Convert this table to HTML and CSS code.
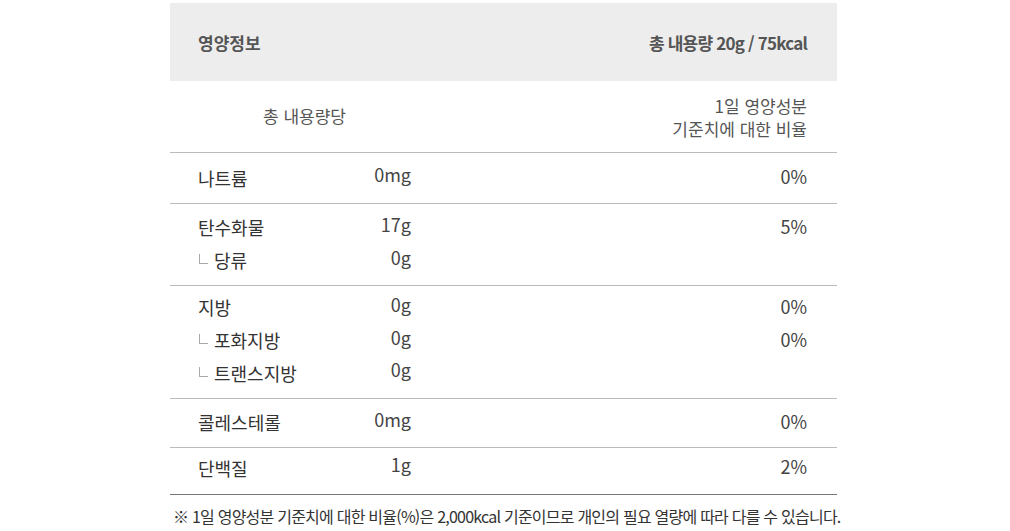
FILE: index.html
```html
<!DOCTYPE html>
<html lang="ko">
<head>
<meta charset="utf-8">
<link rel="stylesheet" href="styles.css">
</head>
<body>
<div class="wrap">
  <div class="nutri">
    <div class="head">
      <span class="head-title">영양정보</span>
      <span class="head-total">총 내용량 20g / 75kcal</span>
    </div>
    <div class="sub">
      <div class="sub-left">총 내용량당</div>
      <div class="sub-right">1일 영양성분<br>기준치에 대한 비율</div>
    </div>
    <div class="group g1">
      <div class="name">나트륨</div><div class="val">0mg</div><div class="pct">0%</div>
    </div>
    <div class="group g2">
      <div class="name">탄수화물</div><div class="val">17g</div><div class="pct">5%</div>
      <div class="name"><span class="tick"></span>당류</div><div class="val">0g</div><div class="pct"></div>
    </div>
    <div class="group g3">
      <div class="name">지방</div><div class="val">0g</div><div class="pct">0%</div>
      <div class="name"><span class="tick"></span>포화지방</div><div class="val">0g</div><div class="pct">0%</div>
      <div class="name"><span class="tick"></span>트랜스지방</div><div class="val">0g</div><div class="pct"></div>
    </div>
    <div class="group g4">
      <div class="name">콜레스테롤</div><div class="val">0mg</div><div class="pct">0%</div>
    </div>
    <div class="group g5">
      <div class="name">단백질</div><div class="val">1g</div><div class="pct">2%</div>
    </div>
  </div>
  <p class="note">※ 1일 영양성분 기준치에 대한 비율(%)은 2,000kcal 기준이므로 개인의 필요 열량에 따라 다를 수 있습니다.</p>
</div>
</body>
</html>
```
FILE: styles.css
```css
* { box-sizing: border-box; }
html, body { margin: 0; padding: 0; background: #fff; }
body {
  font-family: "Noto Sans CJK KR", "Noto Sans", sans-serif;
  color: #333;
}
.wrap {
  padding: 3px 0 0 170px;
}
.nutri {
  width: 667px;
}
.head {
  background: #ededed;
  height: 78px;
  display: flex;
  justify-content: space-between;
  align-items: center;
  padding: 0 30px 0 28px;
  font-weight: 700;
  font-size: 17px;
  color: #555;
}
.head-total {
  letter-spacing: -0.8px;
}
.sub {
  display: grid;
  grid-template-columns: 213px 1fr;
  padding: 13px 30px 9px 28px;
  border-bottom: 1px solid #bbb;
  font-size: 17px;
  color: #555;
  line-height: 23px;
  height: 72px;
}
.sub-left {
  text-align: center;
  align-self: center;
  position: relative;
  top: -3px;
}
.sub-right {
  text-align: right;
}
.group {
  display: grid;
  grid-template-columns: 150px 63px 1fr;
  padding: 8px 30px 8px 28px;
  border-bottom: 1px solid #bbb;
  font-size: 18px;
  line-height: 32px;
}
.g1 { height: 51px; padding-top: 9px; }
.g2 { height: 82px; }
.g3 { height: 113px; padding-top: 6px; }
.g4 { height: 49px; }
.g5 { height: 47px; padding-top: 4px; border-bottom: 1px solid #777; }
.name {
  color: #333;
  display: flex;
  align-items: center;
  position: relative;
  top: -1px;
}
.val {
  text-align: right;
  color: #444;
  position: relative;
  top: -4px;
}
.pct {
  text-align: right;
  color: #444;
  position: relative;
  top: -2px;
}
.tick {
  display: inline-block;
  width: 9px;
  height: 10px;
  border-left: 1px solid #aaa;
  border-bottom: 1px solid #aaa;
  margin: 0 6px 2px 1px;
}
.note {
  margin: 9px 0 0 3px;
  font-size: 16px;
  letter-spacing: -0.77px;
  color: #333;
  white-space: nowrap;
}
```
